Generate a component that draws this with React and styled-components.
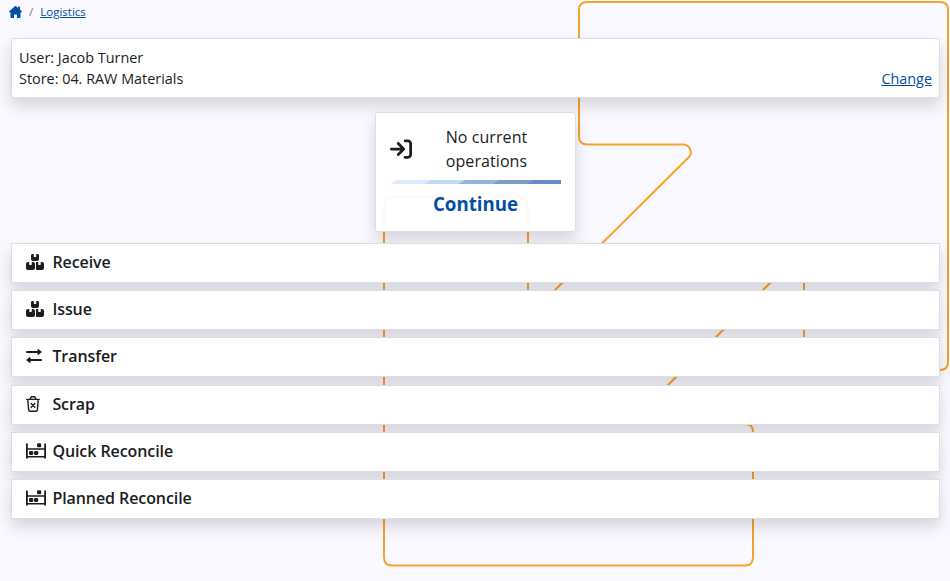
import React from "react";
import styled, { createGlobalStyle } from "styled-components";
import { FaArrowRightToBracket, FaBoxesStacked } from "react-icons/fa6";

const GlobalStyle = createGlobalStyle`
  * { box-sizing: border-box; }
  body {
    margin: 0;
    background: #faf9ff;
    color: #1b1c1e;
    font: 14.4px/21px "Open Sans", sans-serif;
    overflow: hidden;
  }
`;

const Page = styled.div`
  position: relative;
  height: 581px;
  padding: 0 10px 0 11px;
  overflow: hidden;
`;

const Backdrop = styled.svg`
  position: absolute;
  inset: 0;
  pointer-events: none;
`;

const Content = styled.div`
  position: relative;
  display: flex;
  flex-direction: column;
`;

const Breadcrumb = styled.nav`
  display: flex;
  align-items: center;
  height: 24px;
  margin: 0 0 14px -2px;
  font-size: 11.52px;
  line-height: 18px;
  color: #6c757d;
`;

const HomeIcon = styled.svg`
  width: 13px;
  height: 12px;
  fill: #044ea4;
`;

const Separator = styled.span`
  padding: 0 7px;
`;

const Link = styled.a`
  color: #044ea4;
  text-decoration: underline;
`;

const Panel = styled.section`
  background: rgba(255, 255, 255, 0.95);
  border: 1px solid #dedee2;
  border-radius: 3px;
  box-shadow: 0 8px 16px rgba(0, 0, 0, 0.15);
`;

const UserPanel = styled(Panel)`
  display: flex;
  justify-content: space-between;
  align-items: flex-end;
  height: 60px;
  padding: 8px 7px;
  background: #fff;
`;

const OperationPanel = styled(Panel)`
  display: flex;
  flex-direction: column;
  align-items: center;
  align-self: center;
  width: 201px;
  height: 120px;
  margin: 14px 0 11px;
  padding: 12px 14px;
  font-size: 16px;
  line-height: 24px;
  font-weight: 500;
`;

const OperationHead = styled.div`
  display: grid;
  grid-template-columns: 24px 1fr;
  align-items: center;
  width: 100%;
  text-align: center;

  svg { width: 22px; height: 22px; }
  span { padding: 0 27px 0 25px; letter-spacing: 0.08px; }
`;

const Stripe = styled.svg`
  display: block;
  width: 171px;
  height: 4px;
  margin: 7px 0 6px;
  flex: none;
`;

const Continue = styled.a`
  color: #044ea4;
  font-size: 18.7px;
  line-height: 28px;
  font-weight: 700;
`;

const Menu = styled.ul`
  display: flex;
  flex-direction: column;
  gap: 7.2px;
  margin: 0;
  padding: 0;
  list-style: none;
`;

const MenuItem = styled.li`
  display: flex;
  align-items: center;
  height: 40px;
  padding: 0 14px 2px;
  background: rgba(255, 255, 255, 0.99);
  border: 1px solid #dedee2;
  box-shadow: 0 8px 16px rgba(0, 0, 0, 0.15);
  font-size: 16px;
  line-height: 24px;
  font-weight: 600;
  letter-spacing: -0.08px;
`;

const IconSlot = styled.span`
  display: flex;
  align-items: center;
  width: 26.4px;
  flex: none;
`;

function TransferIcon() {
  return (
    <svg width="16" height="16" viewBox="0 0 16 16" fill="currentColor" stroke="currentColor" strokeLinejoin="round">
      <path d="M.9 4H12M15.1 12H4" strokeWidth="1.8" strokeLinecap="round" />
      <path d="M12 1.4L15.4 4L12 6.6zM4 9.4L.6 12L4 14.6z" strokeWidth="1" />
    </svg>
  );
}

function BinIcon() {
  return (
    <svg width="14" height="16" viewBox="0 0 14 16" fill="none" stroke="currentColor" strokeWidth="1.4" strokeLinecap="round" strokeLinejoin="round">
      <path d="M.8 3.4h12.4M4.3 3.2Q4.5.8 6 .8h2q1.5 0 1.7 2.4M1.8 3.6l.8 10q.1 1.6 1.5 1.6h5.8q1.4 0 1.5-1.6l.8-10M5.2 7.4l3.6 3.8M8.8 7.4l-3.6 3.8" />
    </svg>
  );
}

function ShelfIcon() {
  return (
    <svg width="20" height="16" viewBox="0 0 20 16" fill="currentColor">
      <path d="M0 .5h1.8v4.7h16.4V.5H20v15h-1.8v-1H1.8v1H0zM1.8 6.8v6.1h16.4V6.8z" fillRule="evenodd" />
      <rect x="11" y="0.2" width="4.2" height="4" rx="1.3" />
      <rect x="3" y="7.9" width="4.2" height="4.2" rx="1.3" />
      <rect x="8" y="7.9" width="4.2" height="4.2" rx="1.3" />
    </svg>
  );
}

const items = [
  { label: "Receive", icon: <FaBoxesStacked size={18} /> },
  { label: "Issue", icon: <FaBoxesStacked size={18} /> },
  { label: "Transfer", icon: <TransferIcon /> },
  { label: "Scrap", icon: <BinIcon /> },
  { label: "Quick Reconcile", icon: <ShelfIcon /> },
  { label: "Planned Reconcile", icon: <ShelfIcon /> },
];

export default function App() {
  return (
    <Page>
      <GlobalStyle />
      <Backdrop width="950" height="581" fill="none" stroke="#f5a32a" strokeWidth="2">
        <path d="M804 262V362Q804 370 812 370H940Q948 370 948 362V10Q948 2 940 2H587Q579 2 579 10V136.500Q579 144.500 587 144.500H683C690 144.500 693 153 689 157L542 303Q528 315 528 302V205Q528 197 520 197H392Q384 197 384 205V557Q384 565.500 392 565.500H745Q753 565.500 753 557V432Q753 424 745 424H649C642 424 640 413 645 408L790 263Q804 250 804 262" />
      </Backdrop>
      <Content>
        <Breadcrumb>
          <HomeIcon viewBox="0 0 13 12">
            <path d="M5.800.3Q6.500-.3 7.200.3L9 1.900V1.200q0-.6.6-.6h.9q.6 0 .6.6v2.500l1.600 1.500q.5.500.2.9-.2.400-.8.400H11.500v4.400q0 1.100-1.100 1.100H8V8.400H5V12H2.600q-1.100 0-1.100-1.100V6.500H.9q-.6 0-.8-.4-.3-.4.2-.9z" />
          </HomeIcon>
          <Separator>/</Separator>
          <Link>Logistics</Link>
        </Breadcrumb>
        <UserPanel>
          <div>
            <div>User: Jacob Turner</div>
            <div>Store: 04. RAW Materials</div>
          </div>
          <Link>Change</Link>
        </UserPanel>
        <OperationPanel>
          <OperationHead>
            <FaArrowRightToBracket />
            <span>No current operations</span>
          </OperationHead>
          <Stripe viewBox="0 0 171 4">
            <path fill="#dceafa" d="M0 4L7 0H41L34 4z" />
            <path fill="#c3d8f2" d="M34 4L41 0H75L68 4z" />
            <path fill="#94b4de" d="M68 4L75 0H109L101 4z" />
            <path fill="#7b9ccd" d="M101 4L109 0H142L134 4z" />
            <path fill="#6d8cc6" d="M134 4L142 0H171V4z" />
          </Stripe>
          <Continue>Continue</Continue>
        </OperationPanel>
        <Menu>
          {items.map(({ label, icon }) => (
            <MenuItem key={label}>
              <IconSlot>{icon}</IconSlot>
              {label}
            </MenuItem>
          ))}
        </Menu>
      </Content>
    </Page>
  );
}
